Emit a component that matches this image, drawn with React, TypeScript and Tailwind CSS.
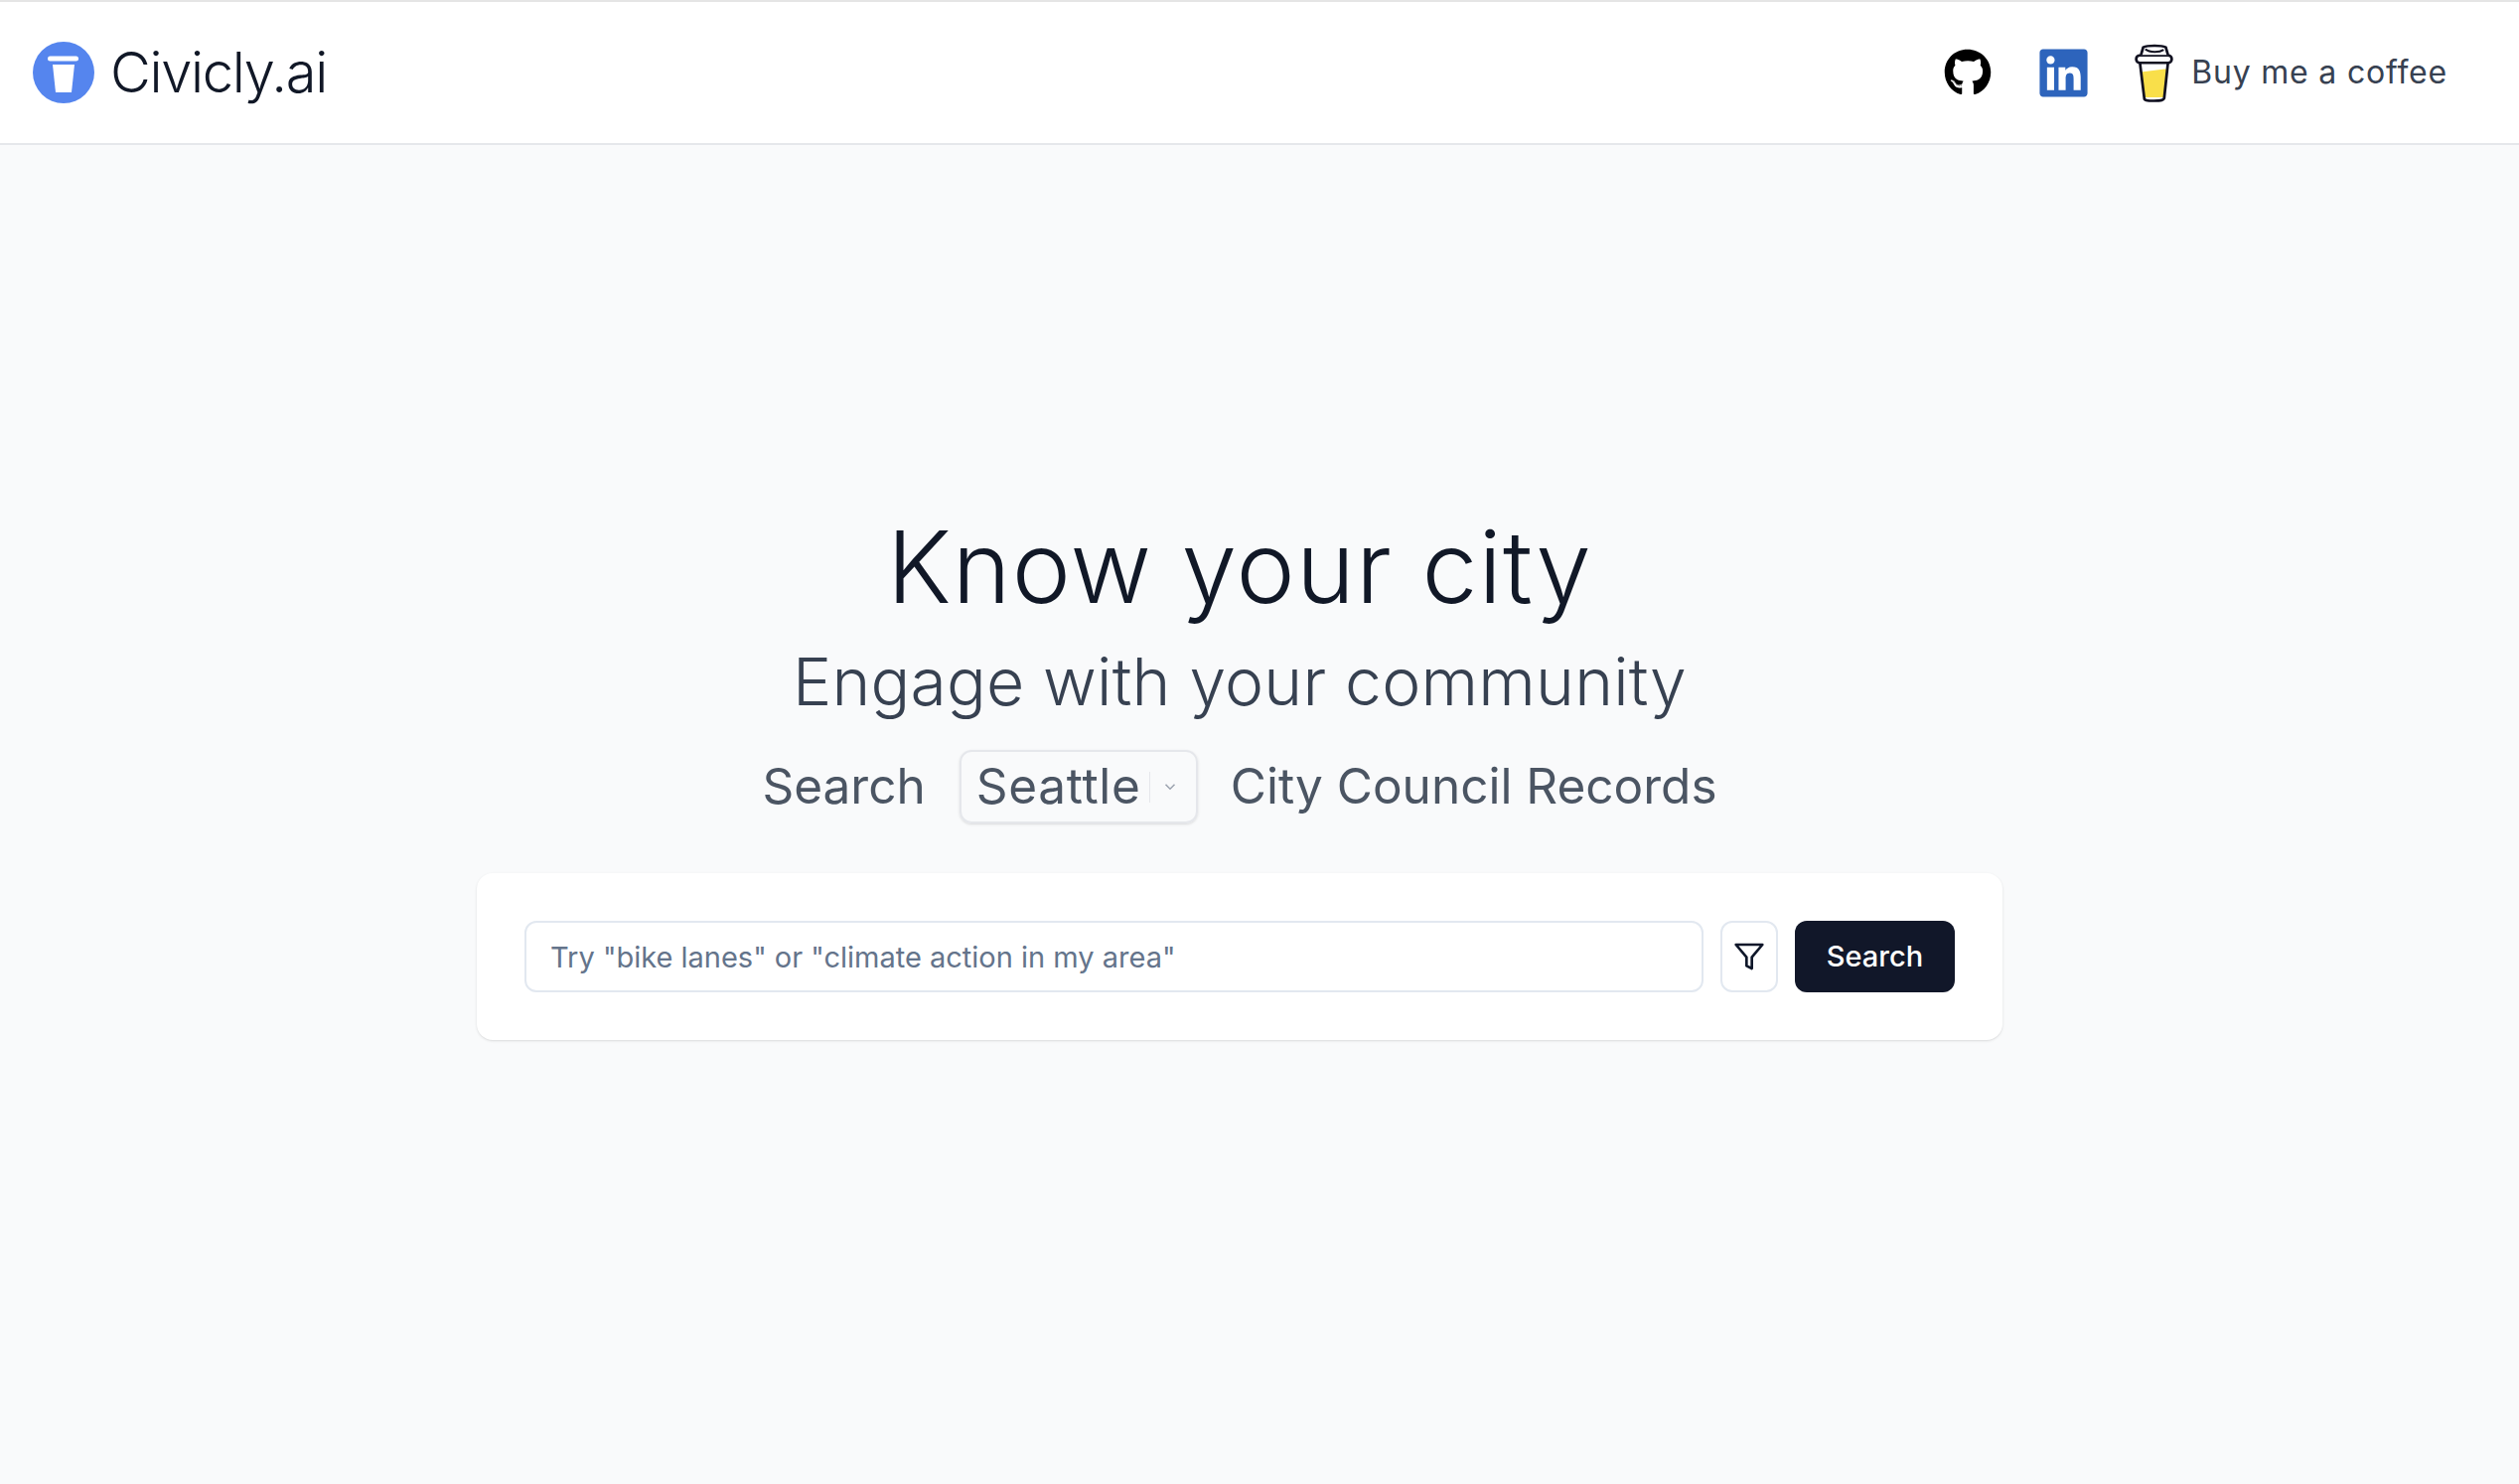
import { FaGithub, FaLinkedin } from 'react-icons/fa'

const FONT = "font-['Inter','Noto_Sans',sans-serif]"

function CupLogo() {
  return (
    <svg viewBox="0 0 62 62" className="w-[62px] h-[62px] shrink-0">
      <circle cx="31" cy="31" r="31" fill="#5585ee" />
      <rect x="15" y="14.500" width="31" height="5" rx="2.500" fill="#fff" />
      <polygon points="20,23 42,23 39,51 23,51" fill="#fff" />
    </svg>
  )
}

function CoffeeCup() {
  return (
    <svg viewBox="0 0 36 58" preserveAspectRatio="none" className="w-[39px] h-[59px] shrink-0">
      <path d="M6 28 L28 25 C29 25 30 25 30 26 L27 53 L9 53 Z" fill="#f9df4a" />
      <path d="M5 19 L9 54 C9 56 11 56.500 18 56.500 C25 56.500 27 56 27.500 54 L31 19" fill="none" stroke="#0f0f1f" strokeWidth="2.500" />
      <rect x="1.500" y="11.500" width="33" height="7.500" rx="3.500" fill="#fff" stroke="#0f0f1f" strokeWidth="2.500" />
      <path d="M6 11 L8 3.500 C12 1.500 25 1.500 29 3.500 L31 11" fill="#fff" stroke="#0f0f1f" strokeWidth="2.500" />
      <path d="M10 5.500 C14 9 23 9 27 6" fill="none" stroke="#0f0f1f" strokeWidth="2" />
    </svg>
  )
}

export default function App() {
  return (
    <div className={`min-h-[1494px] bg-[#f9fafb] flex flex-col ${FONT}`}>
      <header className="h-[146px] bg-white border-t-2 border-b-2 border-t-[#e5e5e5] border-b-[#e5e7eb] pl-[33px] pr-[72px] flex items-center justify-between">
        <div className="flex items-center gap-[16px]">
          <CupLogo />
          <span className="text-[56px] leading-none text-[#111827] font-light tracking-[-1.300px]">Civicly.ai</span>
        </div>
        <div className="flex items-center">
          <FaGithub className="w-[48px] h-[48px] text-black" />
          <FaLinkedin className="w-[55px] h-[55px] ml-[45px] text-[#2d64bc]" />
          <span className="ml-[44px]"><CoffeeCup /></span>
          <span className="ml-[18px] text-[32px] leading-none text-[#374151] tracking-[0.8px]">Buy me a coffee</span>
        </div>
      </header>

      <main className="flex flex-col items-center pt-[361px] pr-[40px]">
        <h1 className="text-[100px] leading-[128px] text-[#111827] font-light tracking-[1.200px]">Know your city</h1>
        <h2 className="mt-[15px] text-[66px] leading-[72px] text-[#374151] font-light tracking-[0.200px]">Engage with your community</h2>
        <div className="mt-[32px] h-[76px] flex items-center text-[49.500px] leading-none text-[#4b5563]">
          <span>Search</span>
          <div className="ml-[34px] w-[240px] h-[74px] rounded-[12px] border-2 border-[#e5e7eb] shadow-sm flex items-center pl-[15px]">
            <span className="tracking-[0.700px]">Seattle</span>
            <span className="ml-auto mr-[17px] h-[31px] pl-[11px] border-l border-[#e5e7eb] flex items-center">
              <svg viewBox="0 0 24 24" className="w-[18px] h-[18px]" fill="none" stroke="#9ca3af" strokeWidth="2">
                <path d="m6 9 6 6 6-6" />
              </svg>
            </span>
          </div>
          <span className="ml-[33px]">City Council Records</span>
        </div>

        <div className="mt-[49px] w-[1536px] h-[168px] bg-white rounded-[16px] shadow-sm px-[48px] flex items-center gap-[17px]">
          <input
            readOnly
            placeholder={'Try "bike lanes" or "climate action in my area"'}
            className={`flex-1 h-[72px] rounded-[12px] border-2 border-[#e2e8f0] bg-white px-[24px] text-[29px] outline-none placeholder:text-[#64748b] ${FONT}`}
          />
          <button className="w-[58px] h-[72px] rounded-[12px] border-2 border-[#e2e8f0] bg-white flex items-center justify-center">
            <svg viewBox="0 0 24 24" className="w-[32px] h-[32px]" fill="none" stroke="#0f172a" strokeWidth="2" strokeLinejoin="round">
              <polygon points="22 3 2 3 10 12.460 10 19 14 21 14 12.460 22 3" />
            </svg>
          </button>
          <button className="w-[161px] h-[72px] rounded-[12px] bg-[#111729] text-white text-[29px] font-medium">Search</button>
        </div>
      </main>
    </div>
  )
}
